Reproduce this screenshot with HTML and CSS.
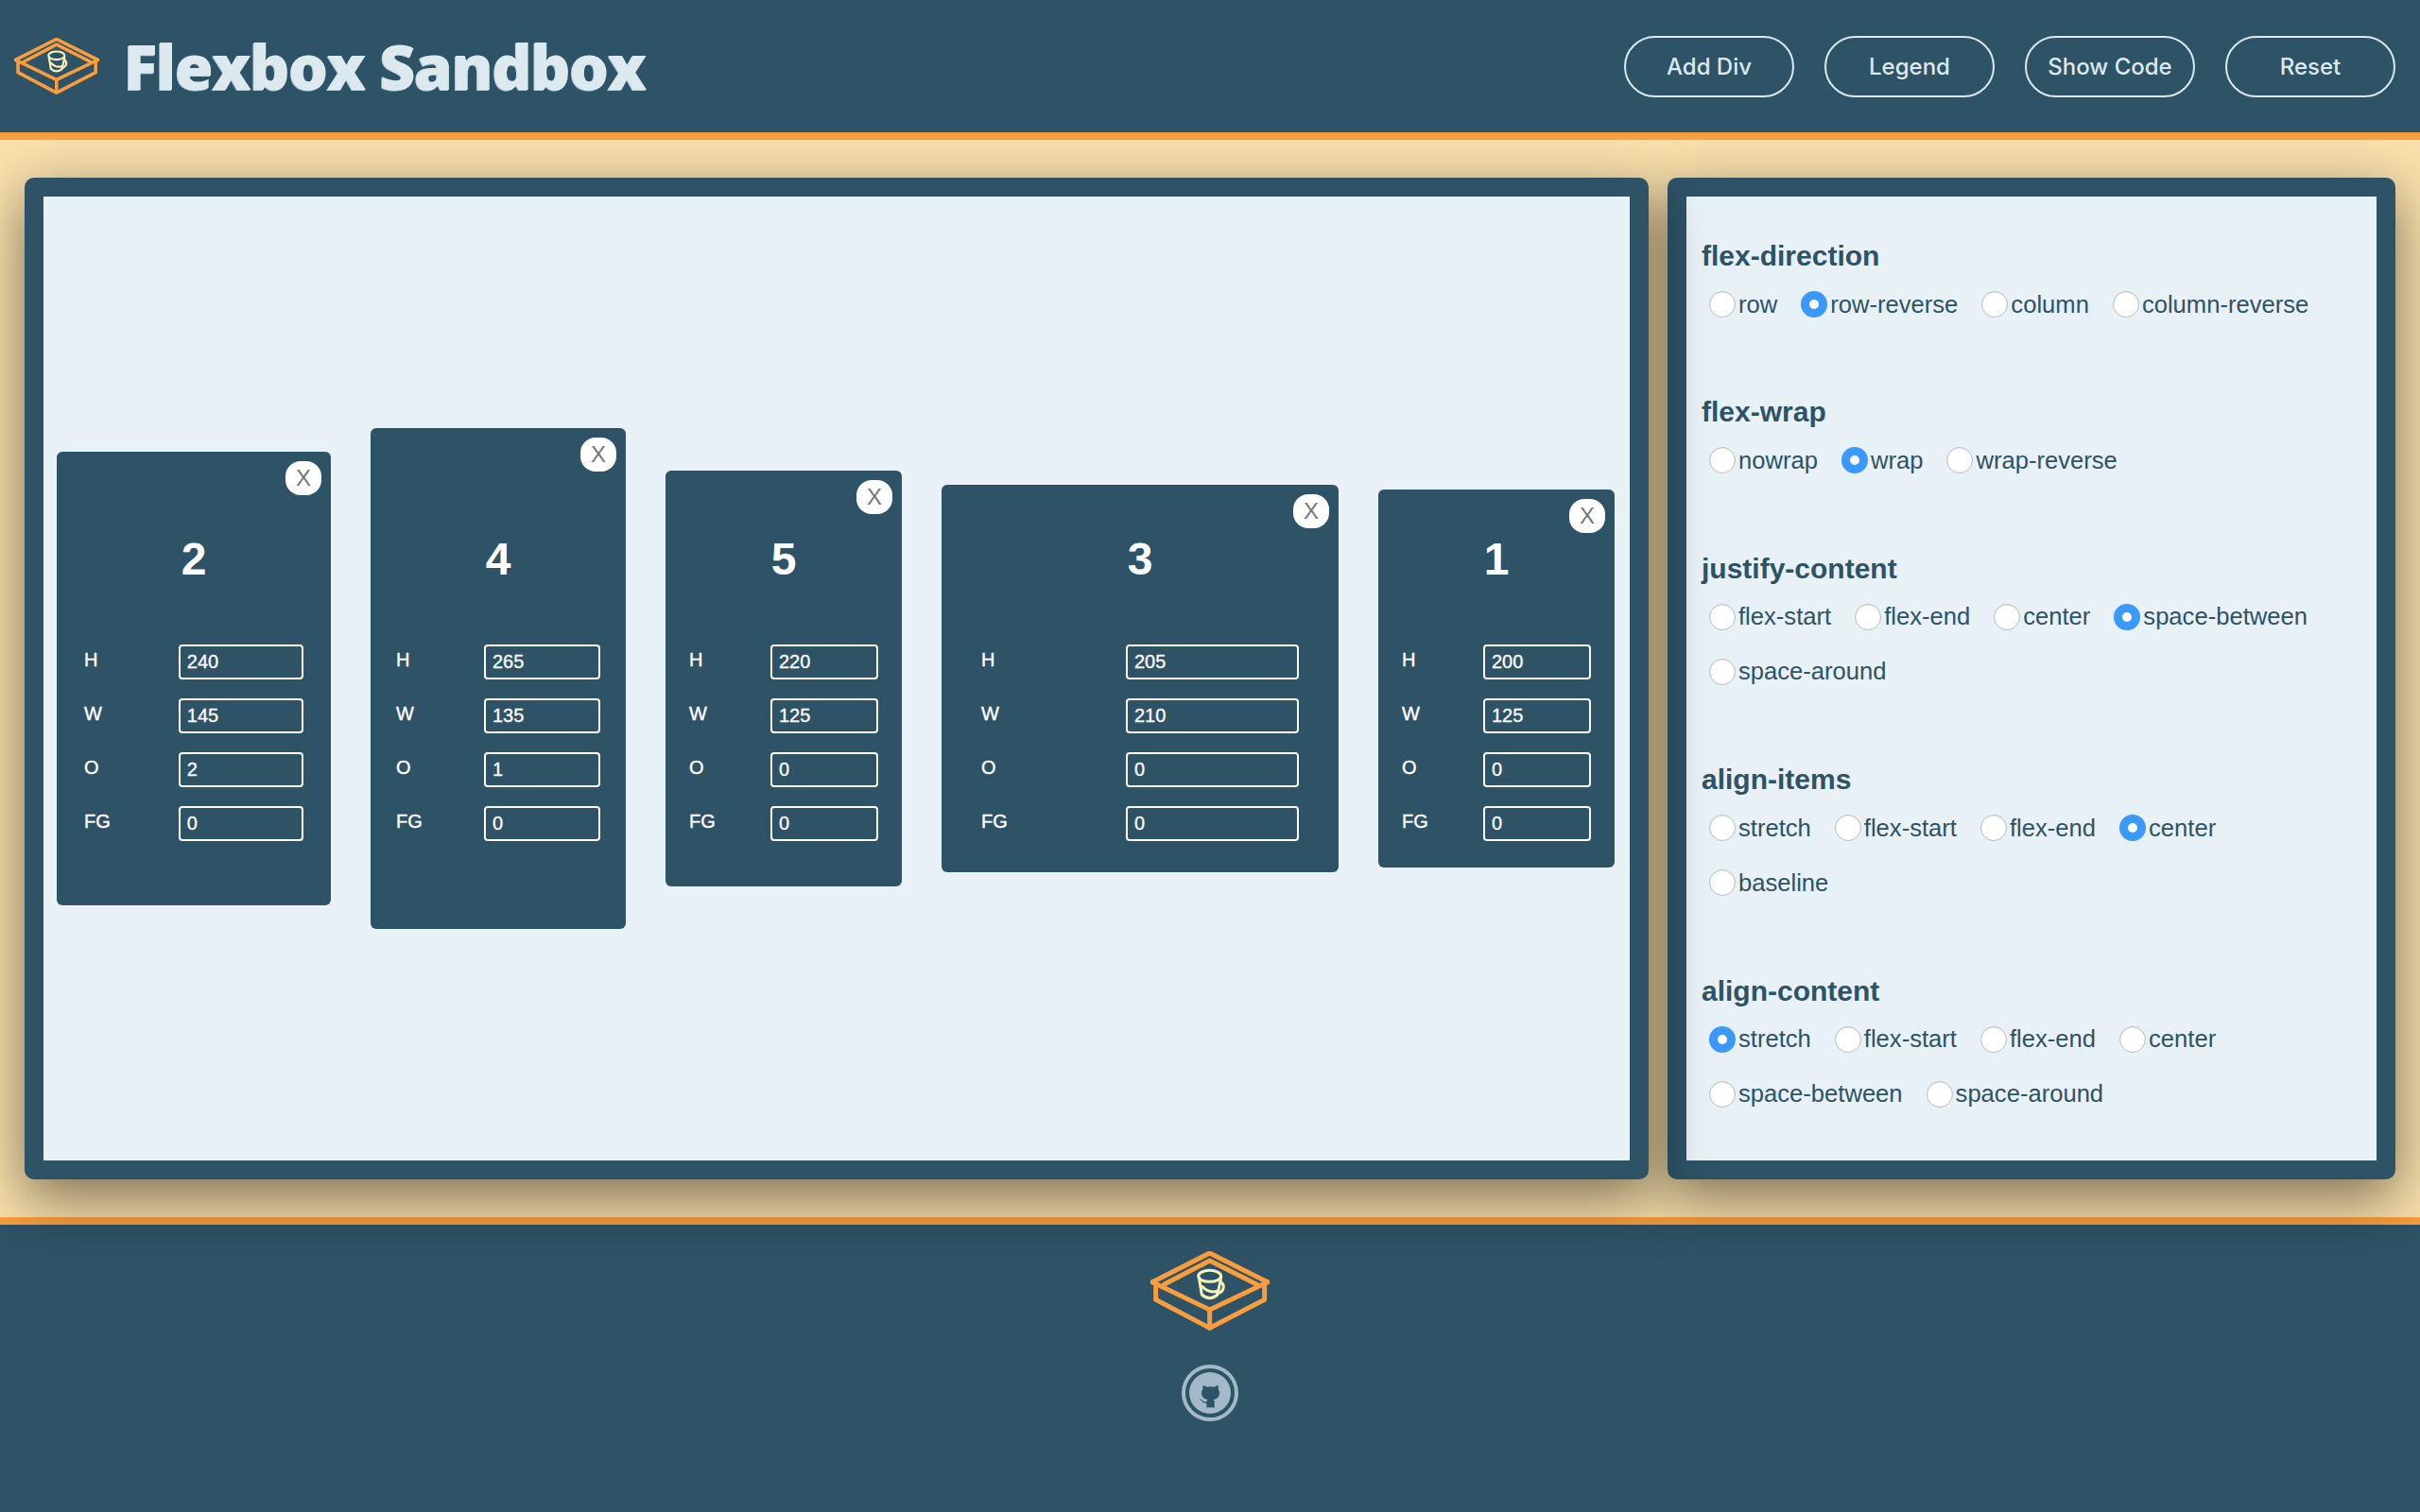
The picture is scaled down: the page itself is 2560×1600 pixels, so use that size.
FILE: index.html
```html
<!DOCTYPE html>
<html lang="en">
<head>
<meta charset="utf-8">
<title>Flexbox Sandbox</title>
<link rel="stylesheet" href="styles.css">
</head>
<body>
<svg class="defs" width="0" height="0" aria-hidden="true">
  <symbol id="sandbox" viewBox="172 192 378 252">
    <g fill="none" stroke="#F99D3D" stroke-width="15" stroke-linejoin="round" stroke-linecap="round">
      <path d="M178 290 360 198 544 290"/>
      <path d="M178 290 360 378 544 290"/>
      <path d="M215 298 360 222 510 298"/>
      <path d="M189 296V346L360 436 534 346V296"/>
      <path d="M360 378V436"/>
    </g>
    <g fill="none" stroke="#F5F3B8" stroke-width="9" stroke-linecap="round">
      <ellipse cx="360" cy="271" rx="36" ry="18"/>
      <path d="M326 276 335 330Q360 352 385 330L396 276"/>
      <path d="M396 290Q408 300 402 314 396 324 384 326"/>
      <path d="M336 304Q358 328 386 318"/>
    </g>
  </symbol>
</svg>

<header class="topbar">
  <div class="brand">
    <svg class="brand-logo"><use href="#sandbox"/></svg>
    <h1 class="brand-title">Flexbox Sandbox</h1>
  </div>
  <nav class="actions">
    <button class="pill">Add Div</button>
    <button class="pill">Legend</button>
    <button class="pill">Show Code</button>
    <button class="pill">Reset</button>
  </nav>
</header>

<main class="workspace">
  <section class="panel panel-canvas">
    <div class="canvas">
      <article class="box" style="width:250px;height:400px;order:0">
        <button class="box-close">X</button>
        <div class="box-body">
          <div class="box-num">1</div>
          <label class="box-row"><span>H</span><input class="box-input" value="200"></label>
          <label class="box-row"><span>W</span><input class="box-input" value="125"></label>
          <label class="box-row"><span>O</span><input class="box-input" value="0"></label>
          <label class="box-row"><span>FG</span><input class="box-input" value="0"></label>
        </div>
      </article>
      <article class="box" style="width:290px;height:480px;order:2">
        <button class="box-close">X</button>
        <div class="box-body">
          <div class="box-num">2</div>
          <label class="box-row"><span>H</span><input class="box-input" value="240"></label>
          <label class="box-row"><span>W</span><input class="box-input" value="145"></label>
          <label class="box-row"><span>O</span><input class="box-input" value="2"></label>
          <label class="box-row"><span>FG</span><input class="box-input" value="0"></label>
        </div>
      </article>
      <article class="box" style="width:420px;height:410px;order:0">
        <button class="box-close">X</button>
        <div class="box-body">
          <div class="box-num">3</div>
          <label class="box-row"><span>H</span><input class="box-input" value="205"></label>
          <label class="box-row"><span>W</span><input class="box-input" value="210"></label>
          <label class="box-row"><span>O</span><input class="box-input" value="0"></label>
          <label class="box-row"><span>FG</span><input class="box-input" value="0"></label>
        </div>
      </article>
      <article class="box" style="width:270px;height:530px;order:1">
        <button class="box-close">X</button>
        <div class="box-body">
          <div class="box-num">4</div>
          <label class="box-row"><span>H</span><input class="box-input" value="265"></label>
          <label class="box-row"><span>W</span><input class="box-input" value="135"></label>
          <label class="box-row"><span>O</span><input class="box-input" value="1"></label>
          <label class="box-row"><span>FG</span><input class="box-input" value="0"></label>
        </div>
      </article>
      <article class="box" style="width:250px;height:440px;order:0">
        <button class="box-close">X</button>
        <div class="box-body">
          <div class="box-num">5</div>
          <label class="box-row"><span>H</span><input class="box-input" value="220"></label>
          <label class="box-row"><span>W</span><input class="box-input" value="125"></label>
          <label class="box-row"><span>O</span><input class="box-input" value="0"></label>
          <label class="box-row"><span>FG</span><input class="box-input" value="0"></label>
        </div>
      </article>
    </div>
  </section>

  <aside class="panel panel-controls">
    <div class="controls">
      <fieldset class="group">
        <h2 class="group-title">flex-direction</h2>
        <div class="options">
          <label class="option"><input type="radio" name="fd">row</label>
          <label class="option"><input type="radio" name="fd" checked>row-reverse</label>
          <label class="option"><input type="radio" name="fd">column</label>
          <label class="option"><input type="radio" name="fd">column-reverse</label>
        </div>
      </fieldset>
      <fieldset class="group">
        <h2 class="group-title">flex-wrap</h2>
        <div class="options">
          <label class="option"><input type="radio" name="fw">nowrap</label>
          <label class="option"><input type="radio" name="fw" checked>wrap</label>
          <label class="option"><input type="radio" name="fw">wrap-reverse</label>
        </div>
      </fieldset>
      <fieldset class="group">
        <h2 class="group-title">justify-content</h2>
        <div class="options">
          <label class="option"><input type="radio" name="jc">flex-start</label>
          <label class="option"><input type="radio" name="jc">flex-end</label>
          <label class="option"><input type="radio" name="jc">center</label>
          <label class="option"><input type="radio" name="jc" checked>space-between</label>
          <label class="option"><input type="radio" name="jc">space-around</label>
        </div>
      </fieldset>
      <fieldset class="group">
        <h2 class="group-title">align-items</h2>
        <div class="options">
          <label class="option"><input type="radio" name="ai">stretch</label>
          <label class="option"><input type="radio" name="ai">flex-start</label>
          <label class="option"><input type="radio" name="ai">flex-end</label>
          <label class="option"><input type="radio" name="ai" checked>center</label>
          <label class="option"><input type="radio" name="ai">baseline</label>
        </div>
      </fieldset>
      <fieldset class="group">
        <h2 class="group-title">align-content</h2>
        <div class="options">
          <label class="option"><input type="radio" name="ac" checked>stretch</label>
          <label class="option"><input type="radio" name="ac">flex-start</label>
          <label class="option"><input type="radio" name="ac">flex-end</label>
          <label class="option"><input type="radio" name="ac">center</label>
          <label class="option"><input type="radio" name="ac">space-between</label>
          <label class="option"><input type="radio" name="ac">space-around</label>
        </div>
      </fieldset>
    </div>
  </aside>
</main>

<footer class="footer">
  <svg class="footer-logo"><use href="#sandbox"/></svg>
  <a class="github" href="#" aria-label="GitHub">
    <svg viewBox="0 0 60 60" width="60" height="60">
      <circle cx="30" cy="30" r="28" fill="none" stroke="#A1B9C8" stroke-width="4"/>
      <circle cx="30" cy="30" r="22" fill="#A1B9C8"/>
      <path fill="#2E5266" d="M25.600 45.200c.5-.1.7-.4.7-.7v-4c-3.500.8-4.500-1.100-4.900-1.700-.3-.6-1.100-1.600-2.700-2.300 1.200-.4 2.600.4 3.300 1.500 1.300 2 3.300 1.600 4.500 1 .1-.9.5-1.700 1-2.100-3.600-.4-6.400-2.300-6.400-6.900 0-1.600.6-2.900 1.500-3.900-.2-.4-.7-1.900.2-3.900 0 0 1.200-.4 4.100 1.500 1.200-.3 2.400-.5 3.700-.5s2.500.2 3.700.5c2.900-1.900 4.100-1.500 4.100-1.500.9 2 .4 3.500.2 3.900.9 1 1.500 2.300 1.500 3.900 0 4.600-2.800 6.500-6.400 6.900.6.500 1 1.400 1 2.800v5.200c0 .2.100.4.300.5z"/>
    </svg>
  </a>
</footer>
</body>
</html>
```

FILE: styles.css
```css
* { box-sizing: border-box; }

html, body { margin: 0; height: 100%; }

body {
  display: flex;
  flex-direction: column;
  min-height: 1600px;
  background: #2E5266;
  font-family: "Liberation Sans", Arial, sans-serif;
  color: #2E5266;
}

.defs { position: absolute; }

/* Header */
.topbar {
  position: relative;
  z-index: 5;
  flex: 0 0 148px;
  display: flex;
  align-items: center;
  justify-content: space-between;
  padding: 0 26px 0 15px;
  background: #2E5266;
  border-bottom: 8px solid #F99D3D;
}

.brand { display: flex; align-items: center; gap: 26px; }
.brand-logo { width: 90px; height: 60px; }

.brand-title {
  margin: 0;
  padding-bottom: 3px;
  font-family: "Open Sans", sans-serif;
  font-size: 66px;
  font-weight: 800;
  line-height: 1;
  letter-spacing: -1.5px;
  color: #DCE9EF;
  text-shadow: -1px 1px 0 #BCD2DD;
}

.actions { display: flex; gap: 32px; }

.pill {
  width: 180px;
  height: 65px;
  padding: 0;
  border: 2px solid #DCE9EF;
  border-radius: 33px;
  background: transparent;
  color: #DCE9EF;
  font-family: Inter, sans-serif;
  font-size: 24px;
  font-weight: 500;
}

/* Main */
.workspace {
  flex: 0 0 1148px;
  min-height: 0;
  display: flex;
  gap: 20px;
  padding: 40px 26px;
  background: #F8DFAB;
  border-bottom: 8px solid #F99D3D;
}

.panel {
  position: relative;
  border: 20px solid #2E5266;
  border-radius: 10px;
  background: #E8F1F5;
  box-shadow: 0 20px 60px rgba(0, 0, 0, .5);
}

.panel-canvas { z-index: 2; flex: 0 0 1718px; }
.panel-controls { z-index: 1; flex: 0 0 770px; }

/* Canvas */
.canvas {
  display: flex;
  flex-flow: row-reverse wrap;
  justify-content: space-between;
  align-items: center;
  align-content: stretch;
  height: 100%;
  padding: 0 16px 0 14px;
}

.box {
  position: relative;
  display: flex;
  flex-direction: column;
  justify-content: center;
  align-items: center;
  border-radius: 6px;
  background: #2E5266;
  color: #fff;
}

.box-body {
  display: flex;
  flex-direction: column;
  gap: 20px;
  width: 80%;
}

.box-close {
  position: absolute;
  top: 10px;
  right: 10px;
  width: 38px;
  height: 36px;
  padding: 0;
  border: 0;
  border-radius: 16px;
  background: #fff;
  color: #777;
  font-family: "Liberation Sans", Arial, sans-serif;
  font-size: 24px;
}

.box-num {
  height: 92px;
  margin-bottom: 24px;
  font-size: 48px;
  font-weight: bold;
  line-height: 92px;
  text-align: center;
}

.box-row {
  display: flex;
  align-items: center;
  justify-content: space-between;
  font-size: 20px;
  -webkit-text-stroke: .4px #fff;
}

.box-row span { position: relative; top: -2px; }

.box-input {
  width: 57%;
  max-width: 183px;
  height: 37px;
  padding: 0 7px;
  border: 2px solid #fff;
  border-radius: 4px;
  background: transparent;
  color: #fff;
  font-family: "Liberation Sans", Arial, sans-serif;
  font-size: 20px;
  -webkit-text-stroke: .3px #fff;
}

/* Controls */
.controls { padding: 44px 32px 0 16px; }

.group {
  margin: 0 0 66.4px;
  padding: 0;
  border: 0;
  min-width: 0;
}

.group:last-child { margin-bottom: 0; }

.group-title {
  margin: 0 0 3px;
  font-size: 30px;
  font-weight: bold;
  line-height: 38px;
}

.options {
  display: flex;
  flex-wrap: wrap;
  padding-left: 8px;
  column-gap: 25px;
}

.option {
  display: flex;
  align-items: center;
  gap: 3px;
  height: 58px;
  font-size: 25.6px;
}

.option input {
  appearance: none;
  flex: none;
  width: 28px;
  height: 28px;
  margin: 0;
  border: 1px solid #B9BDBF;
  border-radius: 50%;
  background: #fff;
  box-shadow: inset 0 1px 2px rgba(0, 0, 0, .08);
}

.option input:checked {
  border: 9px solid #3B99FC;
  background: #fff;
  box-shadow: none;
}

/* Footer */
.footer {
  flex: 1;
  display: flex;
  flex-direction: column;
  align-items: center;
  gap: 36px;
  padding-top: 28px;
}

.footer-logo { width: 126px; height: 84px; }
.github { display: block; width: 60px; height: 60px; }
.github svg { display: block; }
```
